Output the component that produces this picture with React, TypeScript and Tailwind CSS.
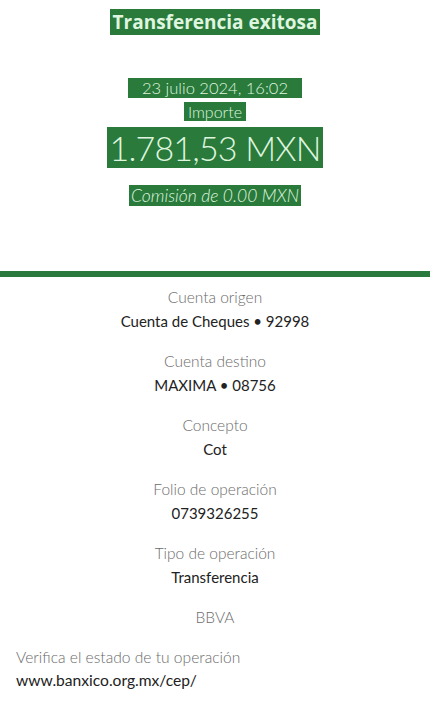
const FONT = { fontFamily: 'Lato, "Open Sans", sans-serif' };
const TITLE_FONT = { fontFamily: '"Open Sans", Lato, sans-serif' };

const rows = [
    { label: 'Cuenta origen', value: 'Cuenta de Cheques • 92998' },
    { label: 'Cuenta destino', value: 'MAXIMA • 08756' },
    { label: 'Concepto', value: 'Cot' },
    { label: 'Folio de operación', value: '0739326255' },
    { label: 'Tipo de operación', value: 'Transferencia' },
];

function Mark({ children, className }: { children: React.ReactNode; className?: string }) {
    return (
        <span className={`bg-[#2a7a3c] text-[#dff5df] px-1 ${className ?? ''}`}>
            {children}
        </span>
    );
}

export default function App() {
    return (
        <div className="w-[430px] h-[701px] bg-white overflow-hidden" style={FONT}>
            <div className="flex flex-col items-center h-[271px]">
                <div className="mt-[11px] text-[19px] font-bold leading-[22px]" style={TITLE_FONT}>
                    <Mark className="px-[3px]">Transferencia exitosa</Mark>
                </div>
                <div className="mt-[45px] text-[16.5px] font-light leading-[20px]">
                    <Mark className="px-[14px]">23 julio 2024, 16:02</Mark>
                </div>
                <div className="mt-[4px] text-[16px] font-light leading-[20px]">
                    <Mark>Importe</Mark>
                </div>
                <div className="mt-[4px] text-[34px] font-light leading-[44px] tracking-[-0.8px]">
                    <Mark className="px-[2px]">1.781,53 MXN</Mark>
                </div>
                <div className="mt-[16px] text-[17.5px] font-light italic leading-[20px]">
                    <Mark className="px-[2px]">Comisión de 0.00 MXN</Mark>
                </div>
            </div>
            <div className="h-[6px] bg-[#2b7a3d]" />
            <div className="flex flex-col items-center pt-[10px]">
                {rows.map((r) => (
                    <div key={r.label} className="flex flex-col items-center h-[64px]">
                        <p className="text-[15.5px] font-light text-[#6b6b6b] leading-[20px]">{r.label}</p>
                        <p className="mt-[4px] text-[15px] text-[#222] leading-[20px]">{r.value}</p>
                    </div>
                ))}
                <p className="text-[15.5px] font-light text-[#6b6b6b] leading-[20px]">BBVA</p>
            </div>
            <div className="px-4 mt-[20px]">
                <p className="text-[15.6px] font-light text-[#6b6b6b] leading-[20px]">Verifica el estado de tu operación</p>
                <p className="mt-[3px] text-[15.6px] text-[#222] leading-[20px]">www.banxico.org.mx/cep/</p>
            </div>
        </div>
    );
}
